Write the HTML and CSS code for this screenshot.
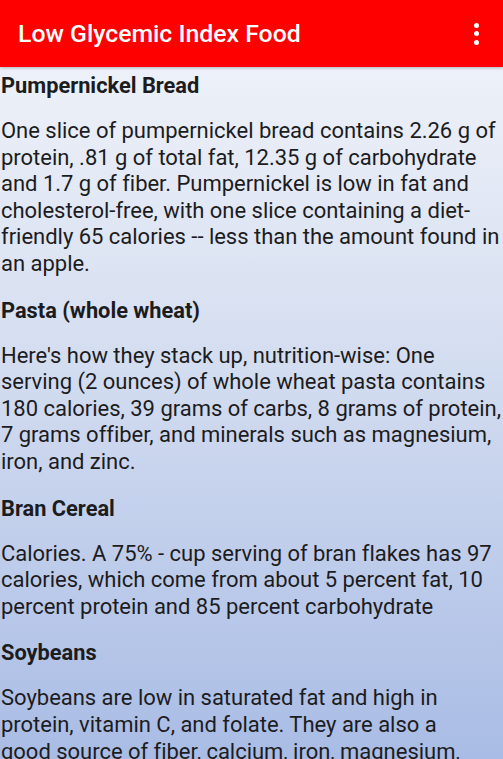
FILE: index.html
```html
<!DOCTYPE html>
<html lang="en">
<head>
    <meta charset="UTF-8">
    <meta name="viewport" content="width=device-width, initial-scale=1.0">
    <title>Low Glycemic Index Food</title>
    <link rel="stylesheet" href="styles.css">
</head>
<body>
	<div class="top-bar">
		<span class="top-bar_title">Low Glycemic Index Food</span>
		<div class="top-bar_menu">
			<span></span><span></span><span></span>
		</div>
	</div>
	<div class="content">
		<h2>Pumpernickel Bread</h2>
		<p>One slice of pumpernickel bread contains 2.26 g of protein, .81 g of total fat, 12.35 g of carbohydrate and 1.7 g of fiber. Pumpernickel is low in fat and cholesterol-free, with one slice containing a diet-friendly 65 calories -- less than the amount found in an apple.</p>

		<h2>Pasta (whole wheat)</h2>
		<p>Here's how they stack up, nutrition-wise: One serving (2 ounces) of whole wheat pasta contains 180 calories, 39 grams of carbs, 8 grams of protein, 7 grams offiber, and minerals such as magnesium, iron, and zinc.</p>

		<h2>Bran Cereal</h2>
		<p>Calories. A 75% - cup serving of bran flakes has 97 calories, which come from about 5 percent fat, 10 percent protein and 85 percent carbohydrate</p>

		<h2>Soybeans</h2>
		<p>Soybeans are low in saturated fat and high in protein, vitamin C, and folate. They are also a<br>good source of fiber, calcium, iron, magnesium, phosphorus, potassium and zinc.</p>
	</div>
</body>
</html>
```

FILE: styles.css
```css
html, body {
    margin: 0;
    height: 100%;
}
body {
    font-family: Roboto, "Liberation Sans", sans-serif;
    color: #1c1c1e;
    overflow: hidden;
    background: linear-gradient(to bottom, #f3f5fa 0%, #d6dff1 45%, #a9bce5 100%);
}
.top-bar {
    background-color: #ff0000;
    color: white;
    height: 67px;
    display: flex;
    align-items: center;
    justify-content: space-between;
    padding: 0 18px;
    box-shadow: 0 1px 3px rgba(0, 0, 0, 0.25);
}
.top-bar_title {
    font-size: 24.8px;
    font-weight: 500;
}
.top-bar_menu {
    display: flex;
    flex-direction: column;
    gap: 3.5px;
    margin-right: 6px;
}
.top-bar_menu span {
    width: 5px;
    height: 5px;
    border-radius: 50%;
    background-color: white;
}
.content {
    padding: 6px 0 0 1px;
}
h2 {
    font-size: 21.8px;
    font-weight: bold;
    line-height: 26px;
    margin: 0 0 19px;
}
p {
    font-size: 22px;
    line-height: 26.6px;
    letter-spacing: -0.02px;
    margin: 0 0 20px;
}
```
